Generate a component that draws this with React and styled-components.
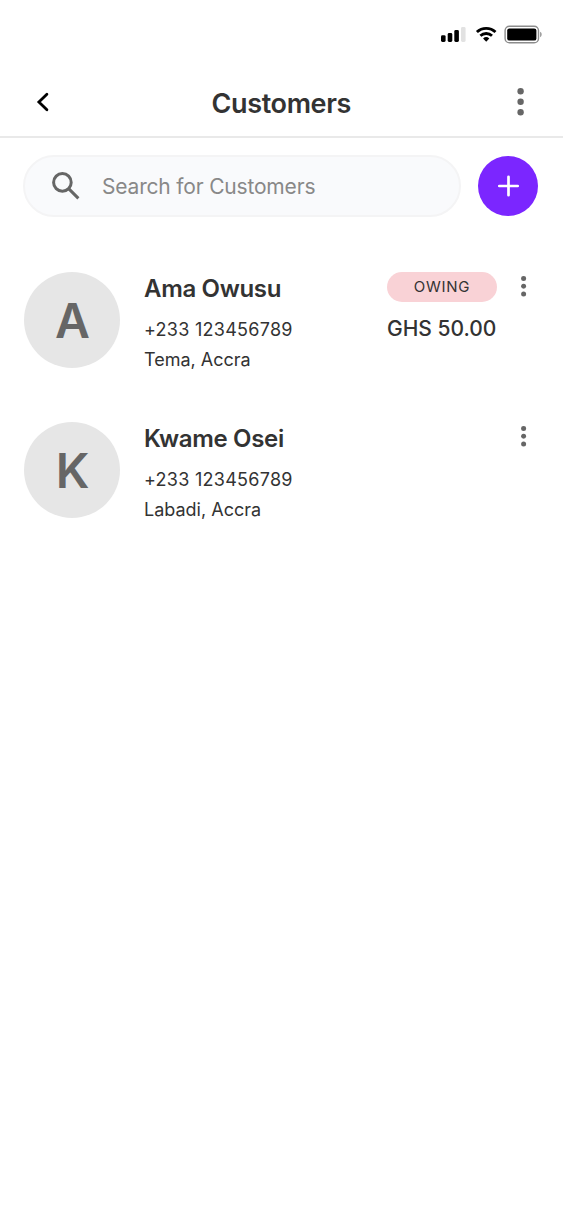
import React, { useState } from "react";
import styled, { createGlobalStyle } from "styled-components";

const customers = [
  {
    id: 1,
    name: "Ama Owusu",
    phone: "+233 123456789",
    location: "Tema, Accra",
    owing: "GHS 50.00",
  },
  {
    id: 2,
    name: "Kwame Osei",
    phone: "+233 123456789",
    location: "Labadi, Accra",
  },
];

const StatusIcons = () => (
  <svg width="102" height="20" viewBox="0 0 102 20">
    {/* signal */}
    <rect x="1" y="10.2" width="4.6" height="6.8" rx="1.4" />
    <rect x="7.7" y="8" width="4.6" height="9" rx="1.4" />
    <rect x="14.3" y="5" width="4.6" height="12" rx="1.4" />
    <rect x="21" y="2" width="4.6" height="15" rx="1.4" fill="#e2e2e2" />
    {/* wifi */}
    <g fill="none" stroke="#000" strokeWidth="2.8">
      <path d="M36.9 7.1a13.3 13.3 0 0 1 18.6 0" />
      <path d="M40.4 10.8a8.4 8.4 0 0 1 11.6 0" />
    </g>
    <path d="M43.1 13.4a4.6 4.6 0 0 1 6.2 0l-3.1 3.3z" />
    {/* battery */}
    <rect x="65.1" y="1.2" width="33.4" height="16.6" rx="4.4" fill="none" stroke="#8c8c8c" strokeWidth="1.4" />
    <rect x="67.2" y="3.4" width="29.2" height="12.2" rx="2.2" />
    <path d="M100 6.8c2.3.9 2.3 4.5 0 5.4z" fill="#a0a0a0" />
  </svg>
);

const BackIcon = () => (
  <svg width="24" height="24" viewBox="0 0 24 24" fill="none">
    <path d="M16.9 4.2 8.9 12l8 7.8" stroke="#000" strokeWidth="2.8" strokeLinecap="round" />
  </svg>
);

const SearchIcon = () => (
  <svg width="36" height="36" viewBox="0 0 36 36" fill="none" stroke="#666">
    <circle cx="14.4" cy="14.4" r="8.8" strokeWidth="3" />
    <path d="m20.4 20.4 10 10" strokeWidth="3" />
  </svg>
);

const PlusIcon = () => (
  <svg width="24" height="24" viewBox="0 0 24 24">
    <path d="M12.5 2.8v18.4M3.3 12h18.4" stroke="#fff" strokeWidth="2.7" strokeLinecap="round" />
  </svg>
);

const DotsIcon = ({ height, radius }) => (
  <svg width="8" height={height} viewBox={`0 0 8 ${height}`} fill="#666">
    <circle cx="3.6" cy={radius} r={radius} />
    <circle cx="3.6" cy={height / 2} r={radius} />
    <circle cx="3.6" cy={height - radius} r={radius} />
  </svg>
);

function Customer({ customer }) {
  return (
    <Row>
      <Avatar>{customer.name[0]}</Avatar>
      <Info>
        <Name>{customer.name}</Name>
        <Phone>{customer.phone}</Phone>
        <Detail>{customer.location}</Detail>
      </Info>
      {customer.owing && (
        <Debt>
          <Badge>OWING</Badge>
          <Amount>{customer.owing}</Amount>
        </Debt>
      )}
      <RowMenu aria-label="Customer options">
        <DotsIcon height={20.6} radius={2.5} />
      </RowMenu>
    </Row>
  );
}

function App() {
  const [search, setSearch] = useState("");

  return (
    <Screen>
      <GlobalStyle />
      <StatusBar>
        <StatusIcons />
      </StatusBar>
      <Header>
        <IconButton aria-label="Back">
          <BackIcon />
        </IconButton>
        <Title>Customers</Title>
        <IconButton aria-label="Menu">
          <DotsIcon height={27.4} radius={3.2} />
        </IconButton>
      </Header>
      {/* search and add */}
      <Toolbar>
        <SearchBox>
          <SearchIcon />
          <SearchInput
            placeholder="Search for Customers"
            value={search}
            onChange={(e) => setSearch(e.target.value)}
          />
        </SearchBox>
        <AddButton aria-label="Add customer">
          <PlusIcon />
        </AddButton>
      </Toolbar>
      <List>
        {customers
          .filter((c) => c.name.toLowerCase().includes(search.toLowerCase()))
          .map((c) => (
            <Customer key={c.id} customer={c} />
          ))}
      </List>
    </Screen>
  );
}

export default App;

const GlobalStyle = createGlobalStyle`
  * {
    box-sizing: border-box;
  }

  body {
    margin: 0;
    background: #fff;
    color: #333;
    font-family: Inter, sans-serif;
  }

  button {
    padding: 0;
    border: none;
    background: none;
    cursor: pointer;
  }

  svg {
    display: block;
    flex-shrink: 0;
  }
`;

const Screen = styled.div`
  min-height: 100vh;
  background: #fff;
`;

const StatusBar = styled.div`
  display: flex;
  justify-content: flex-end;
  height: 68px;
  padding: 25px 21px 0 0;
`;

const Header = styled.header`
  display: flex;
  align-items: center;
  justify-content: space-between;
  height: 70px;
  padding: 0 24.5px 0 24px;
  border-bottom: 2px solid #e9e9e9;
`;

const IconButton = styled.button`
  display: flex;
  align-items: center;
  justify-content: center;
  width: 36px;
  height: 36px;
`;

const Title = styled.h1`
  margin: 0;
  padding-top: 3px;
  font-size: 27px;
  font-weight: 600;
  letter-spacing: -0.35px;
  line-height: 36px;
`;

const Toolbar = styled.div`
  display: flex;
  align-items: center;
  gap: 17px;
  padding: 17px 24.6px 0 23px;
`;

const SearchBox = styled.label`
  display: flex;
  flex: 1;
  align-items: center;
  gap: 18px;
  height: 62px;
  padding: 0 23px;
  border: 2px solid #f4f4f5;
  border-radius: 31px;
  background: #f9fafc;
`;

const SearchInput = styled.input`
  flex: 1;
  min-width: 0;
  padding: 0;
  border: none;
  outline: none;
  background: transparent;
  color: #333;
  font-family: inherit;
  font-size: 21px;
  letter-spacing: -0.18px;

  &::placeholder {
    color: #888;
  }
`;

const AddButton = styled.button`
  display: flex;
  align-items: center;
  justify-content: center;
  width: 60px;
  height: 60px;
  border-radius: 50%;
  background: #7b26ff;
`;

const List = styled.div`
  display: flex;
  flex-direction: column;
  gap: 45px;
  padding: 54.5px 35.5px 0 24px;
`;

const Row = styled.div`
  display: flex;
  align-items: flex-start;
  height: 105px;
`;

const Avatar = styled.div`
  display: flex;
  align-items: center;
  justify-content: center;
  width: 96px;
  height: 96px;
  margin-right: 24px;
  padding: 2px 0 0 1px;
  border-radius: 50%;
  background: #e6e6e6;
  color: #666;
  font-size: 48px;
  font-weight: 600;
`;

const Info = styled.div`
  flex: 1;
`;

const Name = styled.h2`
  margin: 0 0 9px;
  font-size: 24px;
  font-weight: 600;
  letter-spacing: -0.33px;
  line-height: 34px;
`;

const Detail = styled.p`
  margin: 0;
  font-size: 18px;
  line-height: 30px;
`;

const Phone = styled(Detail)`
  letter-spacing: 0.27px;
`;

const Debt = styled.div`
  width: 110px;
  margin-right: 22.5px;
`;

const Badge = styled.div`
  height: 30px;
  border-radius: 15px;
  background: #f9d2d6;
  font-size: 15px;
  letter-spacing: 0.75px;
  line-height: 30px;
  text-align: center;
`;

const Amount = styled.div`
  margin-top: 12px;
  font-size: 21px;
  font-weight: 500;
  line-height: 30px;
  white-space: nowrap;
`;

const RowMenu = styled.button`
  display: flex;
  margin-top: 4.5px;
`;
